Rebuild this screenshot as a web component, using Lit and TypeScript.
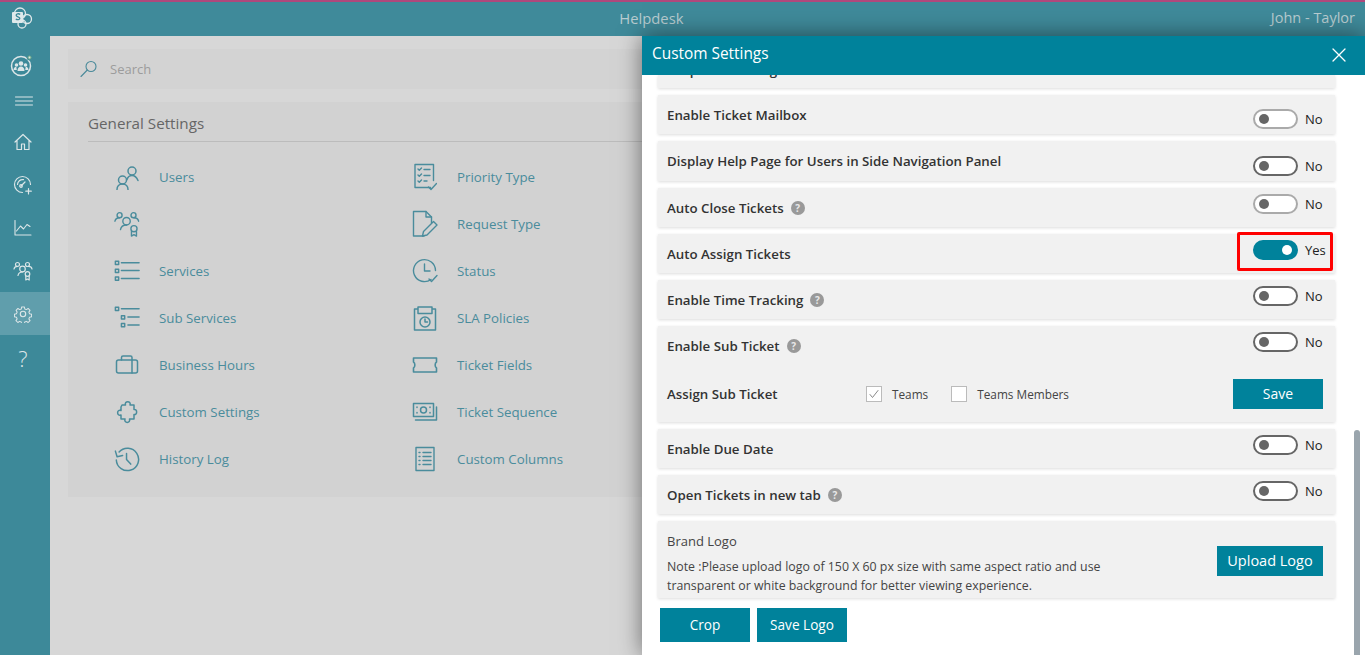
import { LitElement, html, css, svg } from "lit";
import { customElement } from "lit/decorators.js";

const ic = (w: number, h: number, body: unknown, sw = 1.3) => html`<svg width=${w} height=${h} viewBox="0 0 ${w} ${h}" fill="none" stroke="currentColor" stroke-width=${sw} stroke-linecap="round" stroke-linejoin="round">${body}</svg>`;

const users = ic(26, 26, svg`<circle cx="18" cy="7" r="4"/><path d="M13 15.500c.8-2.500 2.500-4 5-4s4.500 1.500 6 5"/><circle cx="8.500" cy="16" r="4"/><path d="M3 25.500c0-3 2-5.500 5.500-5.500s5.500 2.500 5.500 5.500"/>`, 1.5);
const team = ic(28, 28, svg`<circle cx="6" cy="4.500" r="2.700"/><path d="M1 11c.5-2.500 2.400-3.800 5-3.800"/><circle cx="21" cy="4.500" r="2.700"/><path d="M26.500 11c-.5-2.500-2.600-3.800-5-3.800"/><circle cx="13.500" cy="11" r="4"/><path d="M7 20c.5-3 3-5 6.500-5"/><circle cx="21.500" cy="19" r="3.300"/><path d="M18.800 22v5l2.700-1.500 2.700 1.500v-5"/>`, 1.5);
const list = ic(28, 26, svg`<rect x="1.500" y="2.500" width="3.500" height="3.500"/><rect x="1.500" y="11" width="3.500" height="3.500"/><rect x="1.500" y="19.500" width="3.500" height="3.500"/><path d="M8 4h19M8 12.500h19M8 21h19"/>`, 1.6);
const sublist = ic(28, 26, svg`<rect x="1.500" y="1.500" width="3.500" height="3.500"/><rect x="8" y="10.500" width="3.500" height="3.500"/><rect x="8" y="19" width="3.500" height="3.500"/><path d="M8 3h19M15 12h12M15 20.500h12"/>`, 1.6);
const bag = ic(24, 19, svg`<rect x="1.500" y="5" width="21" height="13" rx="2"/><path d="M6.500 5V2.500c0-.8.5-1.500 1.500-1.500h7.500c1 0 1.500.7 1.500 1.500V18"/>`, 1.5);
const puzzle = ic(24, 24, svg`<path d="M7 5h3.500c-1.500-4.500 6-4.500 4.500 0h4v4.500c3.500-1 3.500 6 0 5V19h-4.500c1.500 4.500-6 4.500-4.500 0H6v-4c-4.500 1.500-4.500-6 0-4.500V7z"/>`, 1.5);
const history = ic(28, 28, svg`<path d="M5.500 6.500A12 12 0 1 1 2.500 15"/><path d="M1.500 5.500l1.800 6 6-1.300M13.500 8v6.500l4.500 5" />`, 1.6);
const priority = ic(24, 28, svg`<path d="M17.500 24.500H2V1.500h18.500v16"/><path d="M5 6l1.300 1.300L8.500 5M5 12l1.300 1.300L8.500 11M5 18l1.300 1.300L8.500 17M11 6.500h6M11 12.500h6M11 18h3M15.500 24l2.500 2.500 5.500-6"/>`, 1.4);
const request = ic(26, 28, svg`<path d="M12 26H1.500V1.500h12.500l5.500 5.500v6"/><path d="M14 1.500V7h5.500M10.500 26l1-4.500L21.500 11.500l3.500 3.500-10 10z"/>`, 1.4);
const status = ic(26, 26, svg`<path d="M19 21.500A11 11 0 1 1 23.500 12.500"/><path d="M12.500 6v7h5.500M17 21l2.500 2.500 5.500-6" />`, 1.4);
const sla = ic(24, 26, svg`<path d="M5 4H1.500v21h21V4H19M5 2h14v6.500H5z"/><circle cx="12" cy="17" r="5"/><path d="M12 14v3h2.500"/>`, 1.5);
const ticket = ic(26, 18, svg`<path d="M1.500 2h23v4c-1.800 1-1.800 5 0 6v4h-23v-4c1.800-1 1.800-5 0-6z"/>`, 1.6);
const money = ic(26, 20, svg`<path d="M1.500 1.500h20v13h-20zM24.500 5v13h-21"/><circle cx="11.500" cy="8" r="3"/><path d="M5 5v.5M5 10.500v.5M18 5v.5M18 10.500v.5"/>`, 1.5);
const columns = ic(22, 26, svg`<rect x="2" y="1.500" width="18" height="23"/><path d="M5 6.500h1M9 6.500h8M5 10.500h1M9 10.500h8M5 14.500h1M9 14.500h8M5 18.500h1M9 18.500h8"/>`, 1.4);

const shpLogo = html`<svg width="22" height="22" viewBox="0 0 22 22"><circle cx="9" cy="6.500" r="5.500" fill="none" stroke="#dfe9eb" stroke-width="1.300"/><circle cx="16" cy="12" r="4.500" fill="none" stroke="#dfe9eb" stroke-width="1.300"/><circle cx="11" cy="17" r="4" fill="none" stroke="#dfe9eb" stroke-width="1.300"/><rect x="1" y="5" width="11" height="11" rx="1" fill="#dfe9eb"/><path d="M9.200 7.300c-1.700-1-4-.6-4 1 0 1.800 3.600 1.200 3.600 3 0 1.500-2.300 1.700-4 .8" fill="none" stroke="#3d8999" stroke-width="1.400"/></svg>`;
const groupIco = html`<svg width="24" height="24" viewBox="0 0 24 24"><circle cx="11" cy="13" r="9.500" fill="none" stroke="#dce6e8" stroke-width="1.500"/><g fill="#dce6e8"><circle cx="11" cy="10.500" r="2.300"/><circle cx="6.500" cy="12" r="1.800"/><circle cx="15.500" cy="12" r="1.800"/><path d="M7.500 18c0-3 1.500-4.500 3.500-4.500s3.500 1.500 3.500 4.500zM3.500 17c0-2 1-3.300 2.800-3.300l.5 3.300zM18.500 17c0-2-1-3.300-2.800-3.300l-.5 3.300z"/></g><circle cx="19.500" cy="4.500" r="2.500" fill="#6fa98c" stroke="#3d8999" stroke-width="1"/><circle cx="19.500" cy="4.500" r=".9" fill="#dce6e8"/></svg>`;
const burger = ic(18, 10, svg`<path d="M.5 1h17M.5 5h17M.5 9h17"/>`, 1);
const home = ic(18, 18, svg`<path d="M1 9l8-7.500L17 9M3 7.500V16.500h4.500v-5.500h3v5.500H15V7.500"/>`, 1.2);
const gauge = ic(20, 20, svg`<path d="M9.500 17.500a8 8 0 1 1 8-8M4.500 9.500a5 5 0 0 1 6-4.800M8 11l4-4"/><circle cx="8" cy="11" r="1.300"/><path d="M15.500 13.500v5.500M12.800 16.200h5.500"/>`, 1.2);
const chart = ic(18, 16, svg`<path d="M1 .5v14.500h16M2.500 11l4-5 3 3 3.500-4.500 3 2"/>`, 1.1);
const navTeam = ic(20, 20, svg`<circle cx="4.500" cy="3.500" r="2"/><path d="M1 8c.3-1.700 1.700-2.600 3.500-2.600"/><circle cx="14.500" cy="3.500" r="2"/><path d="M19 8c-.3-1.700-1.700-2.600-3.500-2.600"/><circle cx="9.500" cy="8" r="2.800"/><path d="M5 14.500c.4-2.300 2.200-3.500 4.500-3.500"/><circle cx="14.500" cy="13" r="2.300"/><path d="M12.800 15v4l1.700-1 1.700 1v-4"/>`, 1.2);
const gear = html`<svg width="18" height="18" viewBox="0 0 24 24" fill="none" stroke="currentColor" stroke-width="1.500" stroke-linejoin="round"><circle cx="12" cy="12" r="3.600"/><path d="M10 1.500h4l.6 3 2.400 1 2.600-1.700 2.800 2.800-1.700 2.600 1 2.400 3 .6v4l-3 .6-1 2.400 1.700 2.600-2.800 2.800-2.600-1.700-2.400 1-.6 3h-4l-.6-3-2.400-1-2.600 1.700-2.800-2.800 1.700-2.600-1-2.400-3-.6v-4l3-.6 1-2.400L1.700 6.600l2.800-2.800 2.600 1.700 2.400-1z" transform="translate(1.200 1.200) scale(.9)"/></svg>`;
const search = ic(18, 18, svg`<circle cx="11" cy="6.500" r="5"/><path d="M7.300 10L1 16.500"/>`, 1.1);
const close = ic(14, 14, svg`<path d="M1 1l12 12M13 1L1 13"/>`, 1.3);

const items: [string, unknown, string, unknown][] = [
  ["Users", users, "Priority Type", priority],
  ["", team, "Request Type", request],
  ["Services", list, "Status", status],
  ["Sub Services", sublist, "SLA Policies", sla],
  ["Business Hours", bag, "Ticket Fields", ticket],
  ["Custom Settings", puzzle, "Ticket Sequence", money],
  ["History Log", history, "Custom Columns", columns],
];

@customElement("app-root")
export class AppRoot extends LitElement {
  static styles = css`
    :host { display: block; height: 655px; font-family: "Open Sans", "Liberation Sans", sans-serif; overflow: hidden; position: relative; }
    .app { display: grid; grid-template-columns: 50px 1fr; grid-template-rows: 36px 1fr; height: 655px; background: #d7d7d7; }
    .side { grid-row: 1 / 3; background: #3d8999; color: #dce6e8; display: flex; flex-direction: column; border-top: 2px solid #b0487c; }
    .slot { height: 32px; display: flex; align-items: center; justify-content: center; padding-right: 6px; flex: none; }
    .slot.group { height: 36px; margin-top: 13px; padding-right: 6px; }
    .slot.burger { height: 36px; padding-right: 2px; margin-bottom: 1px; }
    .nav { height: 43px; display: flex; align-items: center; justify-content: center; padding-right: 4px; flex: none; }
    .nav.active { background: #609eac; }
    .q { font-size: 22px; font-weight: 300; color: #dce6e8; height: 42px; margin-top: 2px; }
    .top { background: #3f8a9a; border-top: 2px solid #b0487c; display: flex; align-items: center; justify-content: space-between; padding: 0 10px 3px 0; color: #b9cdd1; font-size: 14.500px; }
    .top .ttl { flex: 1; text-align: center; padding-right: 18px; font-size: 14.800px; }
    .main { padding: 13px 0 0 18px; overflow: hidden; }
    .search { height: 40px; background: #d3d3d3; display: flex; align-items: center; padding-left: 12px; font-size: 13px; gap: 12px; }
    .search span { color: #4a8a9a; display: flex; }
    .search b { font-weight: 400; color: #9c9c9c; }
    .card { margin-top: 13px; height: 395px; background: #d2d2d2; }
    .card h2 { margin: 0 0 0 20px; font-size: 15.200px; font-weight: 400; color: #666; height: 39px; line-height: 42px; border-bottom: 1px solid #bcbcbc; }
    .grid { display: grid; grid-template-columns: 298px 298px; grid-auto-rows: 47px; padding: 11px 0 0 46px; }
    .it { display: flex; align-items: center; color: #4a8c9c; font-size: 13.300px; gap: 19px; }
    .it .ib { width: 26px; display: flex; justify-content: center; align-items: center; flex: none; }
    .panel { position: absolute; left: 642px; top: 36px; right: 0; bottom: 0; background: #fff; box-shadow: 0 0 22px rgba(0,0,0,.5); display: flex; flex-direction: column; }
    .ph { height: 39px; flex: none; background: #00829b; color: #fff; font-size: 15.400px; display: flex; align-items: center; justify-content: space-between; padding: 0 19px 4px 10px; box-sizing: border-box; position: relative; z-index: 1; }
    .ph svg { display: block; margin-top: 2px; }
    .body { padding: 0 30px 0 16px; display: flex; flex-direction: column; gap: 7px; position: relative; }
    .row { background: #f1f1f1; box-shadow: 0 1px 3px rgba(0,0,0,.14); display: flex; justify-content: space-between; align-items: flex-start; padding: 0 12px 0 9px; height: 39px; color: #333; font-size: 13.300px; font-weight: 600; }
    .row.h40 { height: 40px; }
    .clip { height: 13px; overflow: hidden; }
    .clip .lb { margin-top: -25px; }
    .lb { line-height: 40px; display: flex; align-items: center; height: 40px; gap: 7px; }
    .help { width: 14px; height: 14px; border-radius: 50%; background: #999; color: #e8e8e8; font-size: 10px; font-weight: 700; display: flex; align-items: center; justify-content: center; }
    .tg { display: flex; align-items: center; gap: 7px; margin-top: 6px; font-weight: 400; color: #222; font-size: 13px; line-height: 20px; width: 70px; }
    .tg.m14 { margin-top: 14px; }
    .tg.m15 { margin-top: 15px; }
    .sw { width: 45px; height: 20px; box-sizing: border-box; border: 2px solid #666; border-radius: 10px; background: #fff; display: flex; align-items: center; padding-left: 4px; flex: none; }
    .sw.soft { border-color: #aaa; }
    .sw i { width: 10px; height: 10px; border-radius: 50%; background: #666; }
    .sw.on { background: #00829b; border-color: #00829b; justify-content: flex-end; padding: 0 4px 0 0; }
    .sw.on i { background: #fff; }
    .mark { position: absolute; left: 595px; top: 157px; width: 96px; height: 39px; box-sizing: border-box; border: 3px solid #f00; border-radius: 2px; }
    .sub { height: 96px; display: block; padding: 0 12px 0 9px; }
    .sub .a { display: flex; justify-content: space-between; align-items: flex-start; height: 53px; }
    .sub .b { display: flex; align-items: center; height: 30px; }
    .sub .b .n { width: 199px; }
    .ck { display: flex; align-items: center; font-weight: 400; font-size: 11.800px; color: #444; gap: 10px; margin-right: 23px; }
    .box { width: 16px; height: 16px; box-sizing: border-box; border: 1px solid #bbb; background: #fff; display: flex; align-items: center; justify-content: center; color: #888; }
    .btn { background: #00829b; color: #fff; font-size: 14px; font-weight: 400; display: flex; align-items: center; justify-content: center; height: 30px; width: 90px; box-sizing: border-box; padding-bottom: 2px; }
    .btn.save { margin-left: auto; }
    .brand { height: 77px; display: flex; justify-content: space-between; align-items: flex-start; font-weight: 400; }
    .brand .t { padding-top: 11px; font-size: 13px; color: #444; line-height: 19px; width: 445px; }
    .brand .t .nt { margin-top: 6px; font-size: 12.350px; }
    .brand .btn { width: 106px; margin-top: 25px; font-size: 14.500px; }
    .foot { display: flex; gap: 7px; padding: 3px 0 0 2px; }
    .foot .btn { height: 34px; font-size: 13.600px; }
    .bar { position: absolute; left: 712px; top: 394px; bottom: 0; width: 6px; background: #9aa5ad; border-radius: 3px 3px 0 0; }
  `;

  private lab(t: string, help = false) {
    return html`<div class="lb">${t}${help ? html`<span class="help">?</span>` : null}</div>`;
  }
  private tg(cls = "", soft = false) {
    return html`<div class="tg ${cls}"><span class="sw ${soft ? "soft" : ""}"><i></i></span>No</div>`;
  }

  render() {
    return html`
      <div class="app">
        <aside class="side">
          <div class="slot">${shpLogo}</div>
          <div class="slot group">${groupIco}</div>
          <div class="slot burger">${burger}</div>
          <div class="nav">${home}</div>
          <div class="nav">${gauge}</div>
          <div class="nav">${chart}</div>
          <div class="nav">${navTeam}</div>
          <div class="nav active">${gear}</div>
          <div class="nav q">?</div>
        </aside>
        <header class="top"><div class="ttl">Helpdesk</div><div>John - Taylor</div></header>
        <main class="main">
          <div class="search"><span>${search}</span><b>Search</b></div>
          <section class="card">
            <h2>General Settings</h2>
            <div class="grid">
              ${items.map(([a, ai, b, bi]) => html`
                <div class="it"><span class="ib">${ai}</span>${a}</div>
                <div class="it"><span class="ib">${bi}</span>${b}</div>`)}
            </div>
          </section>
        </main>
      </div>
      <div class="panel">
        <div class="ph"><span>Custom Settings</span>${close}</div>
        <div class="body">
          <div class="row clip">${this.lab("Response Settings")}</div>
          <div class="row">${this.lab("Enable Ticket Mailbox")}${this.tg("m14", true)}</div>
          <div class="row h40">${this.lab("Display Help Page for Users in Side Navigation Panel")}${this.tg("m15")}</div>
          <div class="row">${this.lab("Auto Close Tickets", true)}${this.tg("", true)}</div>
          <div class="row">${this.lab("Auto Assign Tickets")}<div class="tg"><span class="sw on"><i></i></span>Yes</div></div>
          <div class="row">${this.lab("Enable Time Tracking", true)}${this.tg()}</div>
          <div class="row sub">
            <div class="a">${this.lab("Enable Sub Ticket", true)}${this.tg()}</div>
            <div class="b"><div class="n">Assign Sub Ticket</div>
              <label class="ck"><span class="box">${ic(10, 10, svg`<path d="M1 5.500l2.500 3L9 1.500"/>`, 1)}</span>Teams</label>
              <label class="ck"><span class="box"></span>Teams Members</label>
              <div class="btn save">Save</div>
            </div>
          </div>
          <div class="row">${this.lab("Enable Due Date")}${this.tg()}</div>
          <div class="row">${this.lab("Open Tickets in new tab", true)}${this.tg()}</div>
          <div class="row brand">
            <div class="t"><div>Brand Logo</div><div class="nt">Note :Please upload logo of 150 X 60 px size with same aspect ratio and use transparent or white background for better viewing experience.</div></div>
            <div class="btn">Upload Logo</div>
          </div>
          <div class="foot"><div class="btn">Crop</div><div class="btn">Save Logo</div></div>
          <div class="mark"></div>
        </div>
        <div class="bar"></div>
      </div>
    `;
  }
}
